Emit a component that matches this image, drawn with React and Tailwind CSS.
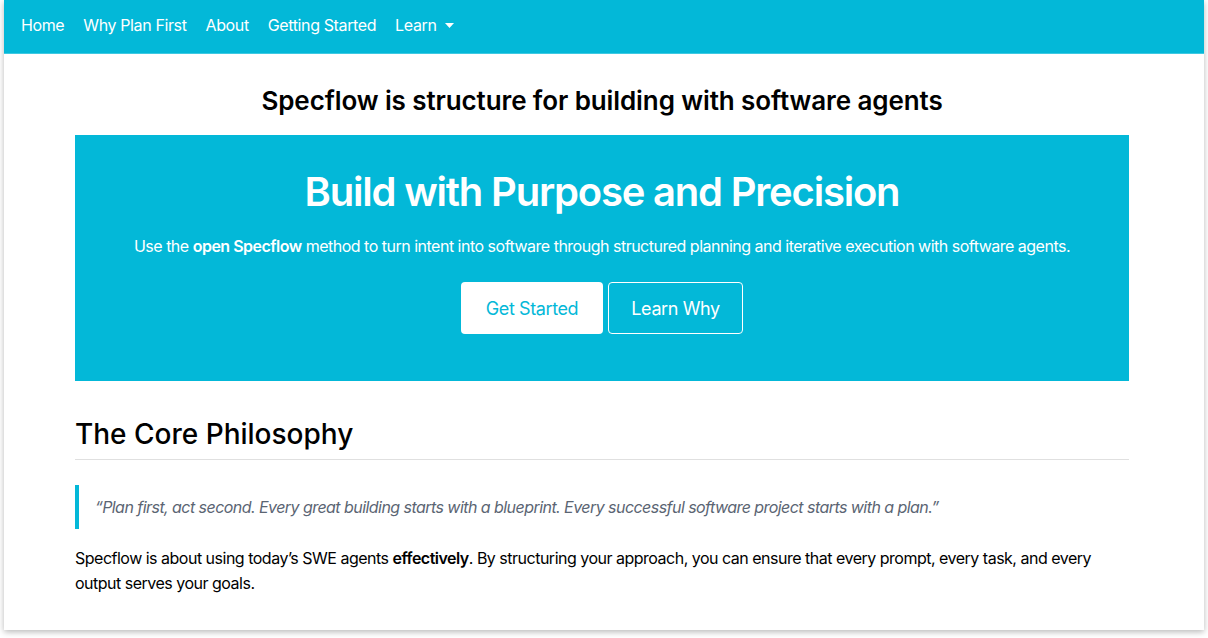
import React from 'react';

const navLinks = ['Home', 'Why Plan First', 'About', 'Getting Started'];

export default function App() {
  return (
    <div className="min-h-[638px] bg-white px-[4px] pb-[8px] font-['Inter','Noto_Sans',sans-serif]">
      <div className="bg-white shadow-[0_2px_6px_rgba(0,0,0,0.28)] h-[630px] overflow-hidden">
        <nav className="h-[54px] bg-[#03b8d8] border-b border-[#3ec9e2] flex items-center pl-[17px] pb-[4px] gap-[19px] text-white text-[16px] tracking-[-0.38px]">
          {navLinks.map((l) => (
            <a key={l} className="leading-none">{l}</a>
          ))}
          <a className="flex items-center gap-[9px] leading-none">
            Learn
            <svg width="9" height="5" viewBox="0 0 9 5" className="mt-[2px]"><path d="M0 0h9L4.5 5z" fill="white" /></svg>
          </a>
        </nav>

        <main className="pl-[71px] pr-[75px]">
          <h1 className="text-center text-[26px] font-semibold text-black pt-[31px] pb-[18px] leading-[32px] tracking-[-0.1px]">
            Specflow is structure for building with software agents
          </h1>

          <section className="bg-[#03b8d8] h-[246px] flex flex-col items-center pt-[33px]">
            <h2 className="text-white text-[40px] font-semibold leading-[48px] tracking-[-1.2px]">Build with Purpose and Precision</h2>
            <p className="text-white text-[16px] mt-[18px] leading-[24px] tracking-[-0.5px]">
              Use the <b className="font-semibold">open Specflow</b> method to turn intent into software through structured planning and iterative execution with software agents.
            </p>
            <div className="flex gap-[5px] mt-[24px]">
              <button className="w-[142px] h-[52px] bg-white rounded-[4px] text-[#03b8d8] text-[18px] tracking-[-0.4px]">Get Started</button>
              <button className="w-[135px] h-[52px] border border-white rounded-[4px] text-white text-[18px] tracking-[-0.4px]">Learn Why</button>
            </div>
          </section>

          <h2 className="text-[28px] font-medium text-black mt-[36px] leading-[34px] pb-[8px] border-b border-[#e0e0e0]">
            The Core Philosophy
          </h2>

          <blockquote className="mt-[25px] border-l-4 border-[#03b8d8] pl-[16px] py-[10px] italic text-[#5b6573] text-[16px] leading-[24px] tracking-[-0.55px]">
            “Plan first, act second. Every great building starts with a blueprint. Every successful software project starts with a plan.”
          </blockquote>

          <p className="mt-[17px] text-[16px] leading-[25px] text-black tracking-[-0.5px]">
            Specflow is about using today’s SWE agents <b className="font-semibold">effectively</b>. By structuring your approach, you can ensure that every prompt, every task, and every output serves your goals.
          </p>
        </main>
      </div>
    </div>
  );
}
